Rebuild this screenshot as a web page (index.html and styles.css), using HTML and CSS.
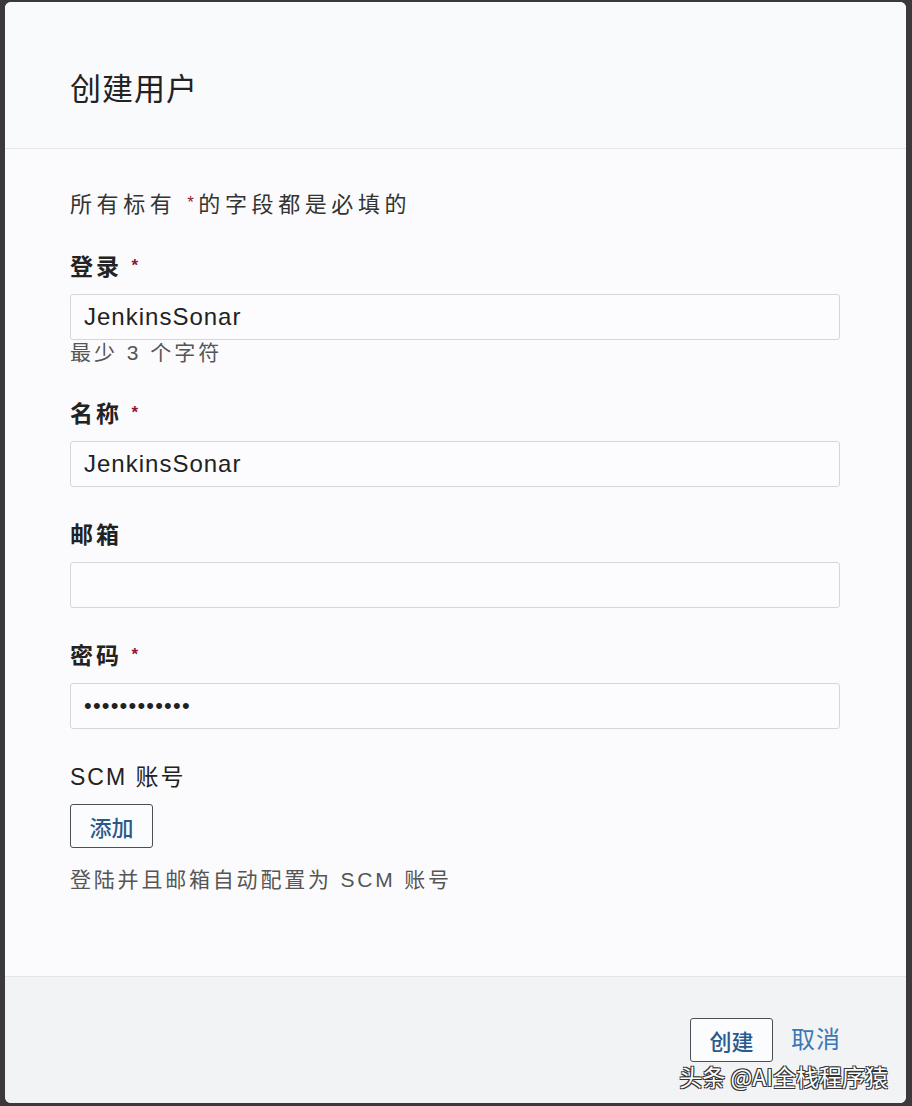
FILE: index.html
```html
<!DOCTYPE html>
<html lang="zh-CN">
<head>
    <meta charset="UTF-8">
    <meta name="viewport" content="width=device-width, initial-scale=1.0">
    <title>创建用户</title>
    <link rel="stylesheet" href="styles.css">
</head>
<body>
    <div class="modal">
        <div class="modal-header">
            <h2>创建用户</h2>
        </div>
        <form class="modal-body" action="">
            <p class="note">所有标有 <span class="req">*</span>的字段都是必填的</p>

            <div class="field">
                <label for="login">登录 <span class="req">*</span></label>
                <input type="text" id="login" value="JenkinsSonar">
                <div class="hint">最少 3 个字符</div>
            </div>

            <div class="field">
                <label for="name">名称 <span class="req">*</span></label>
                <input type="text" id="name" value="JenkinsSonar">
            </div>

            <div class="field">
                <label for="email">邮箱</label>
                <input type="email" id="email">
            </div>

            <div class="field">
                <label for="password">密码 <span class="req">*</span></label>
                <input type="password" id="password" value="jenkinssonar">
            </div>

            <div class="field">
                <label class="plain">SCM 账号</label>
                <button type="button" class="btn">添加</button>
                <div class="hint scm-hint">登陆并且邮箱自动配置为 SCM 账号</div>
            </div>
        </form>
        <div class="modal-footer">
            <button type="button" class="btn">创建</button>
            <a href="#" class="link">取消</a>
        </div>
        <div class="watermark">头条 @AI全栈程序猿</div>
    </div>
</body>
</html>
```

FILE: styles.css
```css
body{
  margin: 0;
  background-color: #3b383e;
  font-family: "Liberation Sans", "Noto Sans CJK SC", sans-serif;
  color: #333;
}

.modal{
  position: relative;
  margin: 2px 6px 3px 5px;
  height: 1101px;
  border-radius: 6px;
  background-color: #fbfbfd;
  display: flex;
  flex-direction: column;
  overflow: hidden;
}

.modal-header{
  height: 147px;
  box-sizing: border-box;
  padding: 22px 65px 0;
  display: flex;
  align-items: center;
  background-color: #f9fafc;
  border-bottom: 1px solid #e4e7eb;
}

.modal-header h2{
  margin: 0;
  font-size: 31px;
  font-weight: normal;
  color: #222;
  letter-spacing: 1px;
}

.modal-body{
  flex: 1;
  padding: 41px 66px 0 65px;
}

.note{
  margin: 0 0 32px;
  font-size: 22px;
  line-height: 30px;
  letter-spacing: 4.6px;
  color: #333;
}

.req{
  color: #8b1a30;
  font-size: 17px;
  line-height: 0;
  vertical-align: 4px;
}

.field{
  margin-bottom: 33px;
}

.field label{
  display: block;
  margin-bottom: 12px;
  font-size: 23px;
  line-height: 30px;
  font-weight: bold;
  color: #222;
  letter-spacing: 3px;
}

.field label.plain{
  font-weight: normal;
  letter-spacing: 2px;
}

.field input{
  display: block;
  width: 100%;
  height: 46px;
  box-sizing: border-box;
  padding: 0 13px;
  border: 1px solid #d3d7dc;
  border-radius: 3px;
  background-color: #fcfcfe;
  font-family: "Liberation Sans", sans-serif;
  font-size: 24px;
  color: #222;
  letter-spacing: 1px;
}

.field input[type=password]{
  font-size: 22px;
  letter-spacing: 1.2px;
}

.hint{
  font-size: 21px;
  line-height: 26px;
  color: #555;
  letter-spacing: 3px;
}

.scm-hint{
  margin-top: 17px;
  line-height: 30px;
  letter-spacing: 2.8px;
}

.btn{
  width: 83px;
  height: 44px;
  padding: 0;
  border: 1px solid #4a4f57;
  border-radius: 3px;
  background-color: #fbfcfe;
  color: #2a5a8c;
  font-family: "Noto Sans CJK SC", sans-serif;
  font-size: 22px;
  font-weight: 500;
  cursor: pointer;
}

.modal-footer{
  height: 127px;
  box-sizing: border-box;
  padding: 41px 65px 0;
  display: flex;
  justify-content: flex-end;
  align-items: flex-start;
  gap: 18px;
  background-color: #f2f3f5;
  border-top: 1px solid #e2e5e9;
}

.link{
  line-height: 44px;
  font-size: 24px;
  color: #3a78b5;
  text-decoration: none;
  letter-spacing: 1px;
}

.watermark{
  position: absolute;
  right: 18px;
  bottom: 15px;
  font-family: "Noto Sans CJK SC", sans-serif;
  font-size: 23px;
  line-height: 1;
  color: #fff;
  text-shadow: 1px 1px 0 #333, -1px -1px 0 #333, 1px -1px 0 #333, -1px 1px 0 #333;
}
```
